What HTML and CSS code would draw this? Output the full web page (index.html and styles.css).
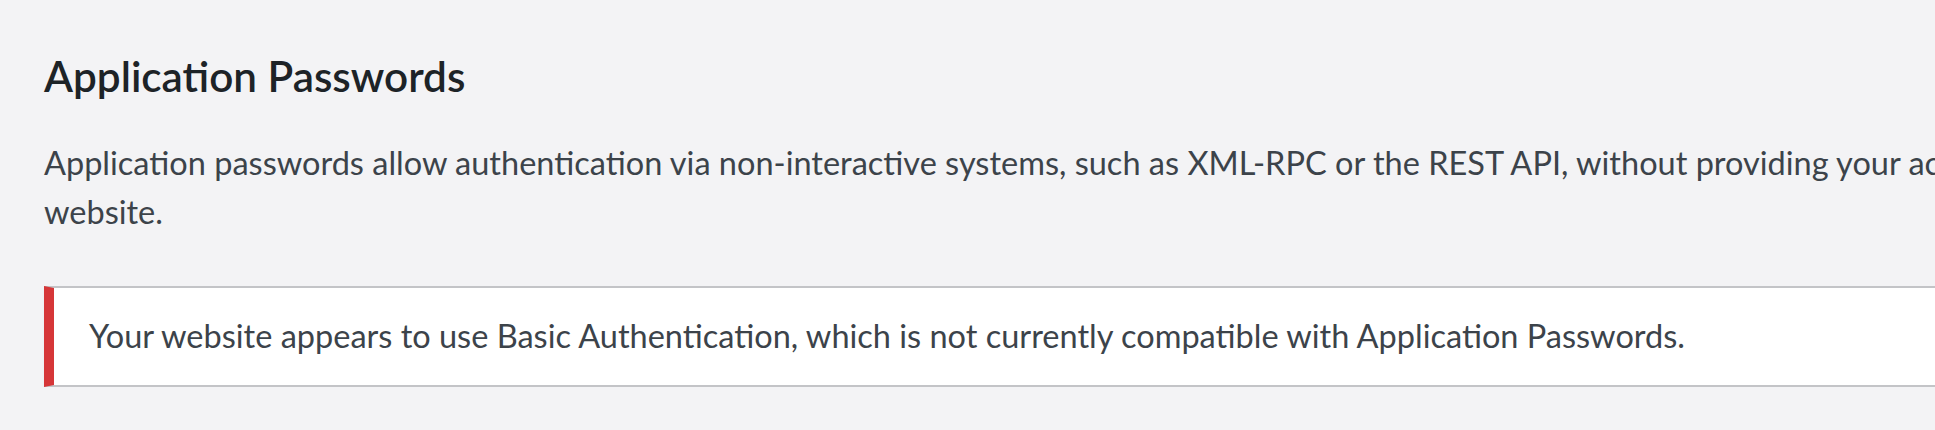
FILE: index.html
```html
<!DOCTYPE html>
<html lang="en">
<head>
<meta charset="utf-8">
<title>Application Passwords</title>
<link rel="stylesheet" href="styles.css">
</head>
<body>
<div class="wrap">
  <h2 class="section-title">Application Passwords</h2>
  <p class="description">Application passwords allow authentication via non-interactive systems, such as XML-RPC or the REST API, without providing your actual password. Application passwords can be easily revoked. They cannot be used for traditional logins to your website.</p>
  <div class="notice notice-error">
    <p>Your website appears to use Basic Authentication, which is not currently compatible with Application Passwords.</p>
  </div>
</div>
</body>
</html>
```
FILE: styles.css
```css
html, body {
  margin: 0;
  padding: 0;
  background: #f3f3f5;
  overflow: hidden;
}

body {
  font-family: Lato, "Liberation Sans", sans-serif;
  color: #3c434a;
}

.wrap {
  width: 3530px;
  padding: 45.8px 0 0 44px;
}

.section-title {
  margin: 0;
  font-size: 42.25px;
  line-height: 1.4;
  font-weight: 600;
  color: #1d2327;
}

.description {
  margin: 34px 0 0;
  font-size: 32.5px;
  line-height: 1.5;
}

.notice {
  margin-top: 50px;
  background: #fff;
  border: 2px solid #c3c4c7;
  border-left: 10px solid #d63638;
  box-shadow: 0 2.5px 2.5px rgba(0, 0, 0, 0.04);
  padding: 2.5px 30px;
}

.notice p {
  margin: 16.25px 0;
  padding: 5px;
  font-size: 32.5px;
  line-height: 1.5;
}
```
